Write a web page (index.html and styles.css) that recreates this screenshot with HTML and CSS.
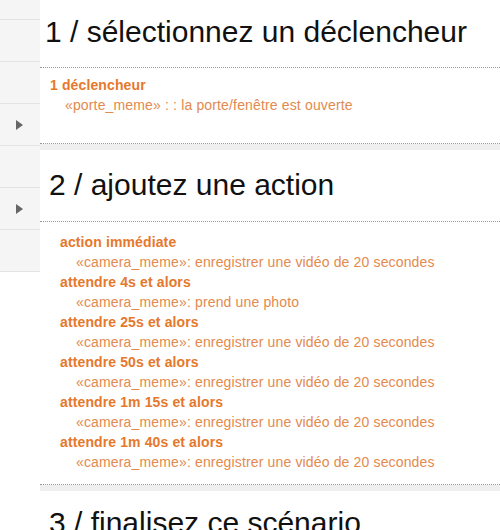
FILE: index.html
```html
<!DOCTYPE html>
<html lang="fr">
<head>
<meta charset="utf-8">
<title>Scénario</title>
<link rel="stylesheet" href="styles.css">
</head>
<body>
<div class="layout">
  <aside class="sidebar">
    <div class="side-row side-row-first"></div>
    <div class="side-row"></div>
    <div class="side-row"></div>
    <div class="side-row"><span class="arrow"></span></div>
    <div class="side-row"></div>
    <div class="side-row"><span class="arrow"></span></div>
    <div class="side-row"></div>
  </aside>
  <main class="main">
    <section class="step step-first">
      <h1 class="step-title title-one">1 / sélectionnez un déclencheur</h1>
      <div class="step-body body-one">
        <div class="label">1 déclencheur</div>
        <div class="detail detail-one">«porte_meme» : : la porte/fenêtre est ouverte</div>
      </div>
    </section>
    <section class="step">
      <h1 class="step-title title-two">2 / ajoutez une action</h1>
      <div class="step-body body-two">
        <div class="label">action immédiate</div>
        <div class="detail">«camera_meme»: enregistrer une vidéo de 20 secondes</div>
        <div class="label">attendre 4s et alors</div>
        <div class="detail">«camera_meme»: prend une photo</div>
        <div class="label">attendre 25s et alors</div>
        <div class="detail">«camera_meme»: enregistrer une vidéo de 20 secondes</div>
        <div class="label">attendre 50s et alors</div>
        <div class="detail">«camera_meme»: enregistrer une vidéo de 20 secondes</div>
        <div class="label">attendre 1m 15s et alors</div>
        <div class="detail">«camera_meme»: enregistrer une vidéo de 20 secondes</div>
        <div class="label">attendre 1m 40s et alors</div>
        <div class="detail">«camera_meme»: enregistrer une vidéo de 20 secondes</div>
      </div>
    </section>
    <section class="step step-last">
      <h1 class="step-title title-three">3 / finalisez ce scénario</h1>
    </section>
  </main>
</div>
</body>
</html>
```
FILE: styles.css
```css
html, body {
  margin: 0;
  padding: 0;
  background: #ffffff;
  font-family: "Liberation Sans", Arial, sans-serif;
}

.layout {
  display: flex;
  align-items: flex-start;
  width: 500px;
}

.sidebar {
  width: 40px;
  flex: 0 0 40px;
  background: #f5f5f5;
}

.side-row {
  height: 41px;
  border-bottom: 1px solid #e3e3e3;
  display: flex;
  align-items: center;
  padding-left: 16px;
  box-sizing: content-box;
}

.side-row-first {
  height: 19px;
}

.arrow {
  width: 0;
  height: 0;
  border-top: 5px solid transparent;
  border-bottom: 5px solid transparent;
  border-left: 7px solid #666666;
  margin-top: 1px;
}

.main {
  flex: 1;
  display: flex;
  flex-direction: column;
  gap: 6px;
  background: #efefef;
}

.step {
  background: #ffffff;
}

.step-title {
  margin: 0;
  font-size: 30px;
  font-weight: normal;
  line-height: 36px;
  color: #111111;
  border-bottom: 1px dotted #9a9a9a;
  white-space: nowrap;
}

.title-one {
  padding: 14px 0 17px 5px;
}

.title-two {
  padding: 17px 0 18px 9px;
}

.title-three {
  padding: 14px 0 18px 9px;
  border-bottom: none;
}

.step-body {
  border-bottom: 1px dotted #9a9a9a;
  font-size: 14px;
  line-height: 20px;
}

.body-one {
  padding: 7px 0 28px 10px;
}

.body-two {
  padding: 10px 0 12px 20px;
}

.label {
  font-weight: bold;
  color: #e6782c;
  letter-spacing: 0.12px;
}

.detail {
  color: #e38a4e;
  padding-left: 16px;
  letter-spacing: 0.15px;
}

.detail-one {
  padding-left: 15px;
}
```
